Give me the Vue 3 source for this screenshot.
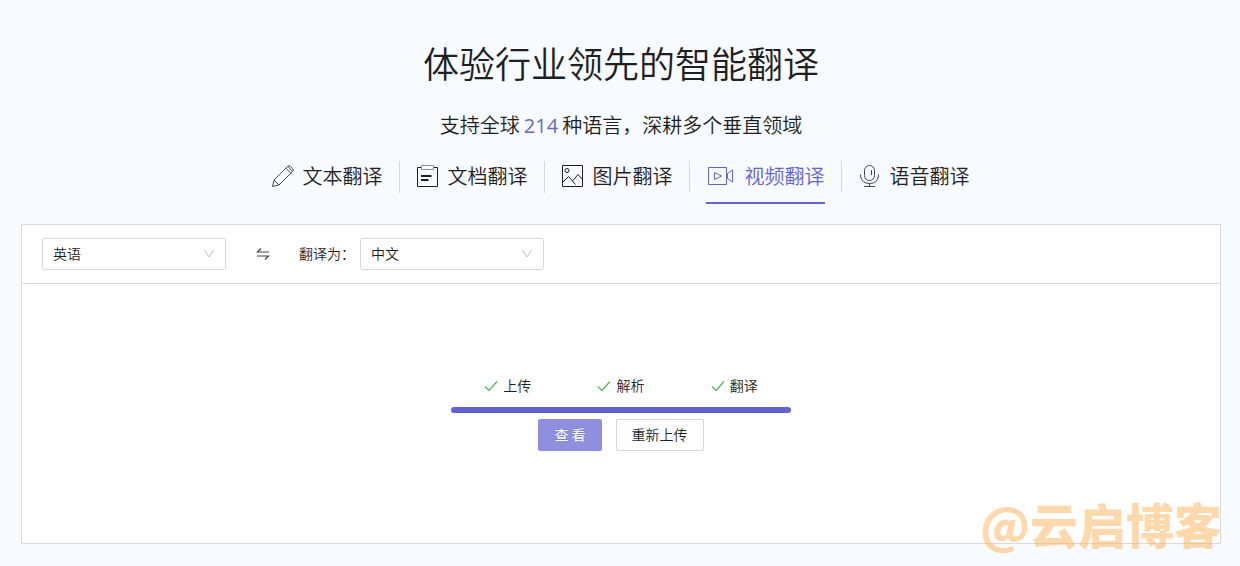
<script setup>
import { ref } from 'vue'

const tabs = [
  { id: 'text', label: '文本翻译' },
  { id: 'doc', label: '文档翻译' },
  { id: 'image', label: '图片翻译' },
  { id: 'video', label: '视频翻译' },
  { id: 'voice', label: '语音翻译' },
]
const active = ref('video')
const steps = ['上传', '解析', '翻译']
const languages = ['英语', '中文']
const source = ref('英语')
const target = ref('中文')
const progress = ref(100)

function swap() {
  const previous = source.value
  source.value = target.value
  target.value = previous
}
</script>

<template>
  <main class="page">
    <h1 class="title">体验行业领先的智能翻译</h1>
    <p class="subtitle">支持全球<span class="count">214</span>种语言，深耕多个垂直领域</p>

    <nav class="tabs">
      <div v-for="tab in tabs" :key="tab.id" class="cell">
        <button type="button" class="tab" :class="{ active: tab.id === active }" @click="active = tab.id">
          <svg v-if="tab.id === 'text'" class="icon pencil" width="24" height="24" viewBox="0 0 24 24">
            <path d="M1.5 22.5 3 16.2 16.6 2.4Q18 1 19.4 2.4L21.7 4.7Q23 6 21.7 7.4L8 21 1.5 22.5ZM3 16.2 8 21M14.8 4.2 19.9 9.3M16.8 2.4 21.6 7.4" />
          </svg>
          <svg v-else-if="tab.id === 'doc'" class="icon" width="24" height="24" viewBox="0 0 24 24">
            <path d="M5.5 3.5H1.5V22.5H21.5V3.5H17.5" />
            <path d="M5.5 1.5H17.5V5.5H5.5Z" class="soft" />
            <path d="M5 12H15.5M5 16H12.5" class="thick" />
          </svg>
          <svg v-else-if="tab.id === 'image'" class="icon" width="24" height="24" viewBox="0 0 24 24">
            <path d="M1.5 1.5H21.5V22.5H1.5ZM1.5 18.5 7.5 12.5 14.5 20.5M11.5 17 17 10.5 21.5 15.5" />
            <circle cx="6" cy="6.5" r="2" />
          </svg>
          <svg v-else-if="tab.id === 'video'" class="icon" width="31" height="24" viewBox="0 0 31 24">
            <path d="M2.5 3.5H20.5V20.5H2.5ZM8.5 8.5V15.5L15.5 12ZM26.5 6V18L21.5 14.5V9.5Z" />
          </svg>
          <svg v-else class="icon mic" width="24" height="24" viewBox="0 0 24 24">
            <rect x="6.5" y="1.5" width="10" height="15" rx="5" />
            <path d="M2.5 10.5V12Q3.5 19.5 11.5 19.5T20.5 12V10.5M11.5 19.5V22.5M6 22.5H17M13.5 6V11" />
          </svg>
          <span>{{ tab.label }}</span>
        </button>
      </div>
    </nav>

    <section class="panel">
      <header class="toolbar">
        <div class="picker">
          <select v-model="source" aria-label="源语言">
            <option v-for="name in languages" :key="name">{{ name }}</option>
          </select>
          <svg class="arrow" width="12" height="12" viewBox="0 0 12 12"><path d="M1.5 2 6 9 10.5 2" /></svg>
        </div>
        <button type="button" class="swap" aria-label="交换语言" @click="swap">
          <svg width="14" height="14" viewBox="0 0 14 14"><path d="M13 5H1.5L5 1.5M1 9H12.5L9 12.5" /></svg>
        </button>
        <label for="target">翻译为：</label>
        <div class="picker">
          <select id="target" v-model="target">
            <option v-for="name in languages" :key="name">{{ name }}</option>
          </select>
          <svg class="arrow" width="12" height="12" viewBox="0 0 12 12"><path d="M1.5 2 6 9 10.5 2" /></svg>
        </div>
      </header>

      <div class="body">
        <ol class="steps">
          <li v-for="step in steps" :key="step">
            <svg width="14" height="14" viewBox="0 0 14 14"><path d="M1 7.5 5 11.5 13 2.5" /></svg>
            <span>{{ step }}</span>
          </li>
        </ol>
        <div class="track"><div class="fill" :style="{ width: progress + '%' }"></div></div>
        <div class="actions">
          <button type="button" class="btn primary">查 看</button>
          <button type="button" class="btn">重新上传</button>
        </div>
      </div>
      <span class="watermark">@云启博客</span>
    </section>
  </main>
</template>

<style>
body {
  background: #f7faff;
}
</style>

<style scoped>
.page {
  padding: 38px 19px 22px 21px;
  font-family: "Noto Sans CJK SC", "Noto Sans", sans-serif;
  font-size: 14px;
  font-weight: 350;
  color: #1f1f1f;
}
.title {
  margin: 0;
  font-size: 36px;
  line-height: 48px;
  font-weight: 350;
  text-align: center;
}
.subtitle {
  margin: 23px 0 0;
  font-size: 20px;
  line-height: 32px;
  text-align: center;
}
.count {
  margin: 0 4px;
  font-family: "Open Sans", sans-serif;
  font-weight: 400;
  color: #6a65d0;
}
button,
select {
  font: inherit;
  color: inherit;
  cursor: pointer;
}
.tabs {
  display: flex;
  justify-content: center;
  height: 64px;
  margin-top: 18px;
}
.cell {
  display: flex;
  padding: 0 16px;
}
.cell + .cell {
  background: linear-gradient(#d5d8df, #d5d8df) left 1px / 1px 32px no-repeat;
  padding-left: 17px;
}
.cell:last-child {
  padding-right: 18px;
}
.tab {
  display: flex;
  align-items: center;
  gap: 8px;
  height: 44px;
  padding: 0 0 10px;
  border: 0;
  border-bottom: 2px solid transparent;
  background: none;
  font-size: 20px;
  line-height: 32px;
}
.tab.active {
  color: #6661d2;
  border-color: #6661d2;
}
.icon {
  flex: none;
  fill: none;
  stroke: currentColor;
  stroke-width: 1;
}
.pencil,
.mic {
  stroke: #44474f;
}
.soft {
  stroke: #8b8f98;
}
.thick {
  stroke-width: 2;
}
.panel {
  position: relative;
  border: 1px solid #d9d9de;
  background: #fff;
}
.toolbar {
  display: flex;
  align-items: center;
  height: 58px;
  padding: 0 20px;
  border-bottom: 1px solid #d9d9de;
}
.picker {
  position: relative;
  width: 184px;
}
.picker select {
  display: block;
  width: 100%;
  height: 32px;
  padding: 0 10px 2px;
  border: 1px solid #d9d9d9;
  border-radius: 2px;
  background: #fff;
  appearance: none;
}
.arrow {
  position: absolute;
  top: 10px;
  right: 11px;
  fill: none;
  stroke: #bfbfbf;
  pointer-events: none;
}
.swap {
  display: flex;
  margin: 0 29px 0 30px;
  padding: 0;
  border: 0;
  background: none;
}
.swap svg {
  fill: none;
  stroke: #444;
  stroke-width: 1.2;
}
.toolbar label {
  width: 61px;
  padding-bottom: 2px;
  white-space: nowrap;
}
.body {
  display: flex;
  flex-direction: column;
  align-items: center;
  padding: 91px 0 92px;
}
.steps {
  display: grid;
  grid-template-columns: repeat(3, 1fr);
  width: 340px;
  margin: 0;
  padding: 0;
  list-style: none;
}
.steps li {
  display: flex;
  align-items: center;
  justify-content: center;
  gap: 5px;
  line-height: 20px;
}
.steps svg {
  margin-top: 2px;
  fill: none;
  stroke: #5cb567;
  stroke-width: 1.3;
}
.track {
  width: 340px;
  height: 6px;
  margin-top: 12px;
  border-radius: 3px;
  background: #eee;
}
.fill {
  height: 100%;
  border-radius: 3px;
  background: #6461d2;
}
.actions {
  display: flex;
  gap: 14px;
  margin-top: 6px;
}
.btn {
  height: 32px;
  padding: 0 15px 2px;
  border: 1px solid #d9d9d9;
  border-radius: 2px;
  background: #fff;
  box-shadow: 0 2px 0 rgba(0, 0, 0, 0.02);
}
.primary {
  border-color: #8e8fdf;
  background: #8e8fdf;
  font-weight: 400;
  color: #fff;
  text-shadow: 0 -1px 0 rgba(0, 0, 0, 0.12);
}
.watermark {
  position: absolute;
  right: -2px;
  bottom: -4px;
  font-size: 48px;
  line-height: 48px;
  font-weight: 900;
  color: rgba(255, 184, 97, 0.55);
  pointer-events: none;
}
</style>
